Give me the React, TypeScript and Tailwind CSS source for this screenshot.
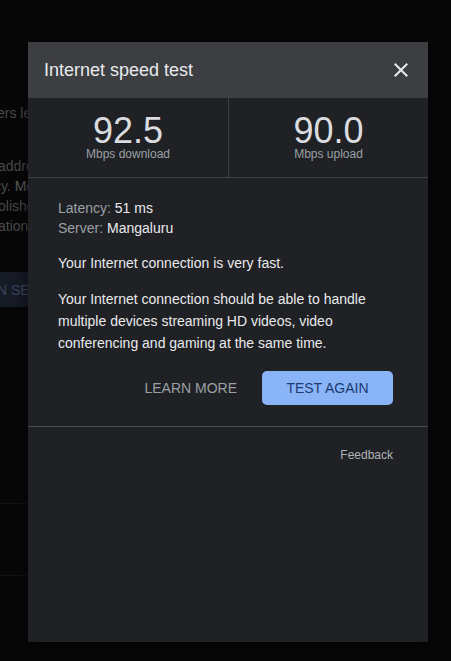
// ── Background page (only a strip shows left of the dialog) ────────────────

function BackgroundPage() {
  return (
    <div className="w-[28px] overflow-hidden text-[14px] leading-5 text-[#4a4a4a]">
      <div className="pt-[103px] -ml-[3px] whitespace-nowrap">ers learn more about your connection</div>
      <div className="mt-[33px] -ml-[2px] whitespace-nowrap">address and location</div>
      <div className="-ml-[6px] whitespace-nowrap">
        cy. <span className="text-[#5e5e5e]">More details</span>
      </div>
      <div className="-ml-[2px] whitespace-nowrap">olished results</div>
      <div className="-ml-[2px] whitespace-nowrap">ation services</div>
      <div className="mt-[36px] flex h-[35px] w-[120px] items-center bg-[#171b26] -ml-[3px] text-[14px] text-[#3b4560] whitespace-nowrap">
        N SETTINGS
      </div>
      <div className="mt-[196px] h-px w-[60px] bg-[#141414]" />
      <div className="mt-[71px] h-px w-[60px] bg-[#141414]" />
    </div>
  )
}

// ── Dialog ─────────────────────────────────────────────────────────────────

function Stat({ value, label, divider }: { value: string; label: string; divider?: boolean }) {
  return (
    <div className={`flex flex-col items-center pt-[17px] ${divider ? 'border-l border-[#3c4043]' : ''}`}>
      <span className="text-[36px] leading-[32px] text-[#dadce0]">{value}</span>
      <span className="text-[12px] leading-[14px] text-[#9aa0a6]">{label}</span>
    </div>
  )
}

function SpeedTestDialog() {
  return (
    <div className="absolute left-[28px] top-[42px] flex h-[600px] w-[400px] flex-col bg-[#202124] shadow-[0_4px_16px_rgba(0,0,0,0.6)]">
      {/* Header */}
      <div className="flex h-[56px] shrink-0 items-center justify-between bg-[#3c3e41] pl-4 pr-[15px]">
        <h2 className="text-[18px] text-[#e8eaed]">Internet speed test</h2>
        <button aria-label="Close" className="text-[#e8eaed]">
          <svg width="24" height="24" viewBox="0 0 24 24" fill="currentColor">
            <path d="M19 6.41L17.59 5 12 10.59 6.41 5 5 6.41 10.59 12 5 17.59 6.41 19 12 13.41 17.59 19 19 17.59 13.41 12z" />
          </svg>
        </button>
      </div>

      {/* Results */}
      <div className="grid h-[80px] shrink-0 grid-cols-2 border-b border-[#3c4043]">
        <Stat value="92.5" label="Mbps download" />
        <Stat value="90.0" label="Mbps upload" divider />
      </div>

      {/* Details */}
      <div className="pl-[30px] pr-[35px] pt-5 text-[14px] text-[#e8eaed]">
        <div className="leading-5">
          <p>
            <span className="text-[#9aa0a6]">Latency: </span>51 ms
          </p>
          <p>
            <span className="text-[#9aa0a6]">Server: </span>Mangaluru
          </p>
        </div>
        <p className="mt-[14px] leading-[22px]">Your Internet connection is very fast.</p>
        <p className="mt-[14px] leading-[22px]">
          Your Internet connection should be able to handle multiple devices streaming HD videos, video
          conferencing and gaming at the same time.
        </p>

        <div className="mt-[17px] flex items-center justify-end gap-[25px]">
          <button className="text-[14px] text-[#9aa0a6]">LEARN MORE</button>
          <button className="flex h-[34px] w-[131px] items-center justify-center rounded-[5px] bg-[#8ab4f8] text-[14px] text-[#1c3a6e]">
            TEST AGAIN
          </button>
        </div>
      </div>

      <div className="mt-[21px] h-px bg-[#4a4c50]" />

      <div className="flex justify-end pr-[35px] pt-[20px]">
        <button className="text-[12px] leading-4 text-[#b0b4b9]">Feedback</button>
      </div>
    </div>
  )
}

export default function App() {
  return (
    <div className="relative h-[661px] w-[451px] overflow-hidden bg-[#070707] font-['Liberation_Sans',Arial,sans-serif]">
      <BackgroundPage />
      <SpeedTestDialog />
    </div>
  )
}
